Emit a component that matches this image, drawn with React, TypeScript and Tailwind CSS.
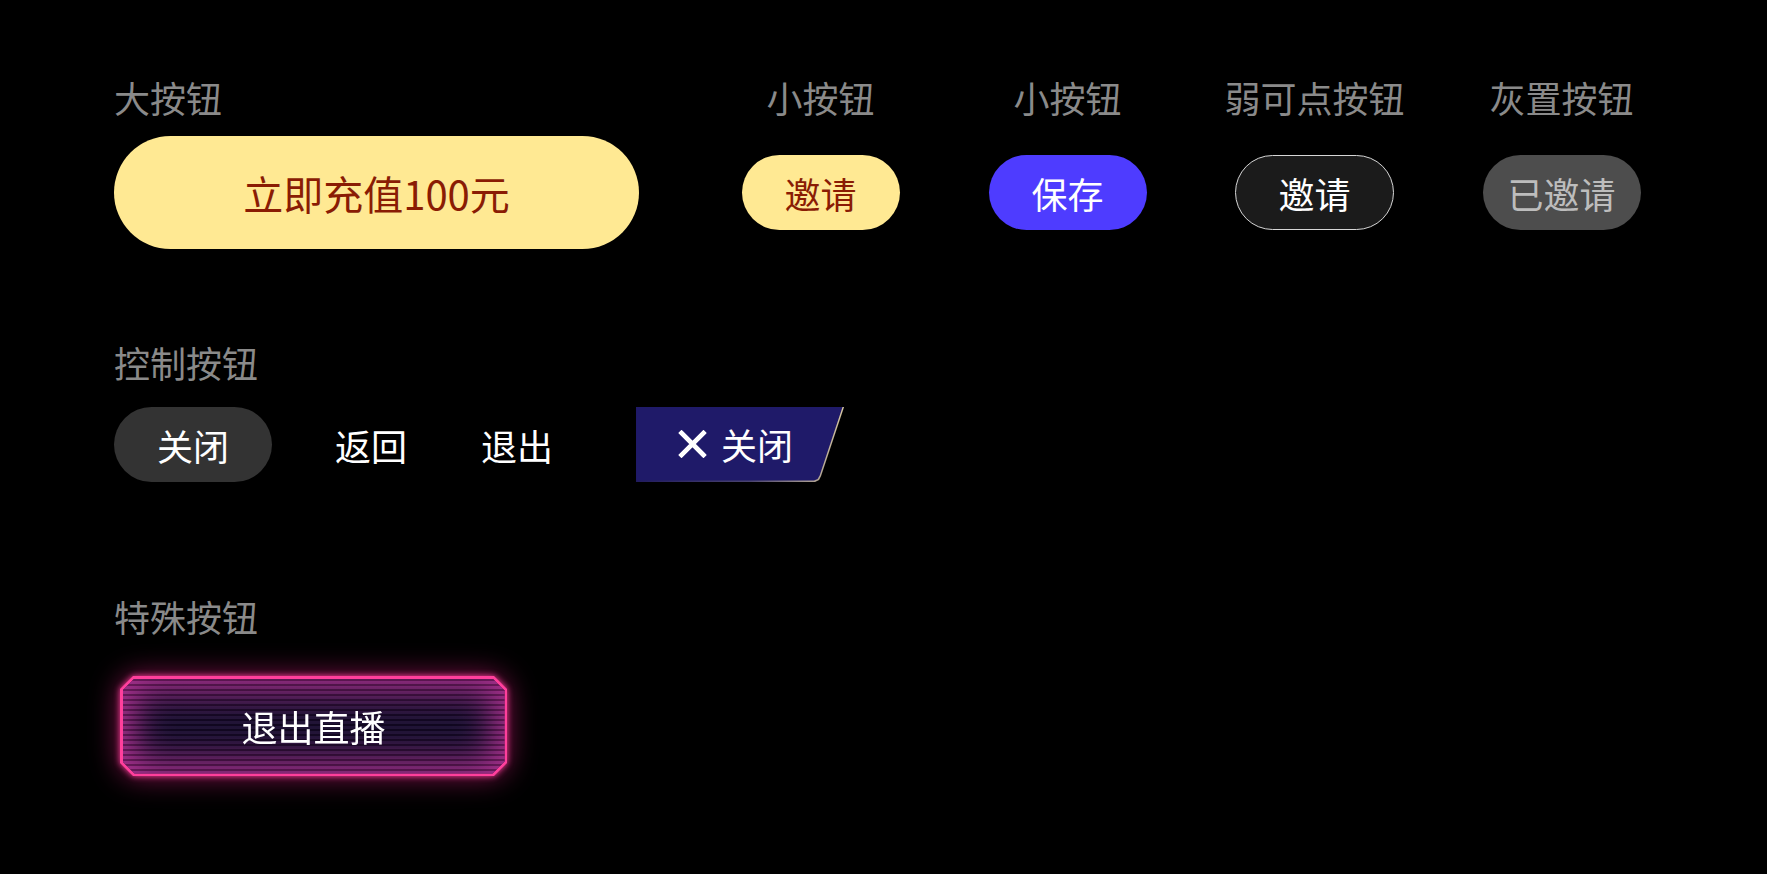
const FONT = "font-['Noto_Sans_CJK_SC','Noto_Sans',sans-serif]";

function Label({ children }: { children: string }) {
  return <div className="text-[36px] leading-none text-[#8a8a8a]">{children}</div>;
}

function SmallCol({ label, children }: { label: string; children: React.ReactNode }) {
  return (
    <div className="flex w-[247px] flex-col items-center">
      <Label>{label}</Label>
      <div className="mt-[21px] flex h-[113px] items-center">{children}</div>
    </div>
  );
}

function CloseIcon() {
  return (
    <svg width="29" height="28" viewBox="0 0 29 28" fill="none">
      <path d="M3.5 3L25.5 25M25.5 3L3.5 25" stroke="#fff" strokeWidth="4.6" strokeLinecap="square" />
    </svg>
  );
}

export default function App() {
  return (
    <div className={`h-[874px] w-full overflow-hidden bg-black pl-[114px] pt-[79px] ${FONT}`}>
      {/* 大按钮 / 小按钮 */}
      <section className="flex items-start">
        <div className="flex w-[525px] flex-col">
          <Label>大按钮</Label>
          <button className="mt-[21px] flex h-[113px] w-[525px] items-center justify-center rounded-full bg-[#ffe993] text-[40px] leading-none text-[#8a1c04]">
            立即充值100元
          </button>
        </div>
        <div className="ml-[58px] flex">
          <SmallCol label="小按钮">
            <button className="flex h-[75px] w-[158px] items-center justify-center rounded-full bg-[#ffe993] text-[36px] leading-none text-[#8a1c04]">
              邀请
            </button>
          </SmallCol>
          <SmallCol label="小按钮">
            <button className="flex h-[75px] w-[158px] items-center justify-center rounded-full bg-[#4e3cff] text-[36px] leading-none text-white">
              保存
            </button>
          </SmallCol>
          <SmallCol label="弱可点按钮">
            <button className="flex h-[75px] w-[159px] items-center justify-center rounded-full border border-[#d6d6d6] bg-[#1b1b1b] text-[36px] leading-none text-white">
              邀请
            </button>
          </SmallCol>
          <SmallCol label="灰置按钮">
            <button className="flex h-[75px] w-[158px] items-center justify-center rounded-full bg-[#4d4d4d] text-[36px] leading-none text-[#bdbdbd]">
              已邀请
            </button>
          </SmallCol>
        </div>
      </section>

      {/* 控制按钮 */}
      <section className="mt-[95px]">
        <Label>控制按钮</Label>
        <div className="mt-[27px] flex h-[75px] items-center">
          <button className="flex h-[75px] w-[158px] items-center justify-center rounded-full bg-[#333333] text-[36px] leading-none text-white">
            关闭
          </button>
          <button className="ml-[63px] text-[36px] leading-none text-white">返回</button>
          <button className="ml-[74px] text-[36px] leading-none text-white">退出</button>
          <div className="ml-[83px] h-[75px] w-[208px] bg-[linear-gradient(90deg,#221c5e_0%,#4b4470_55%,#d9c9a2_100%)] [clip-path:polygon(0_0,208px_0,185px_69px,183px_73px,179px_75px,0_75px)]">
            <button className="flex h-[73.5px] w-[208px] items-center gap-[14px] bg-[#1f1a69] pl-[42px] text-[36px] leading-none text-white [clip-path:polygon(0_0,206.5px_0,183.6px_68.5px,181.6px_72px,178px_73.5px,0_73.5px)]">
              <CloseIcon />
              <span>关闭</span>
            </button>
          </div>
        </div>
      </section>

      {/* 特殊按钮 */}
      <section className="mt-[116px]">
        <Label>特殊按钮</Label>
        <div className="ml-[6px] mt-[42px] w-[387px] [filter:drop-shadow(0_0_3px_#ff3d9a)_drop-shadow(0_0_14px_rgba(210,30,125,0.6))]">
          <div className="h-[100px] w-[387px] bg-[#ff3f9c] p-[2.5px] [clip-path:polygon(13px_0,calc(100%_-_13px)_0,100%_13px,100%_calc(100%_-_13px),calc(100%_-_13px)_100%,13px_100%,0_calc(100%_-_13px),0_13px)]">
            <button className="relative flex h-full w-full items-center justify-center bg-[#140a2c] text-[36px] leading-none text-white shadow-[inset_0_0_34px_12px_rgba(178,42,145,0.95)] [clip-path:polygon(12px_0,calc(100%_-_12px)_0,100%_12px,100%_calc(100%_-_12px),calc(100%_-_12px)_100%,12px_100%,0_calc(100%_-_12px),0_12px)]">
              <span className="pointer-events-none absolute inset-0 bg-[repeating-linear-gradient(180deg,rgba(0,0,0,0.3)_0px,rgba(0,0,0,0.3)_2px,rgba(255,255,255,0.04)_2px,rgba(255,255,255,0.04)_5px)]" />
              <span className="relative">退出直播</span>
            </button>
          </div>
        </div>
      </section>
    </div>
  );
}
